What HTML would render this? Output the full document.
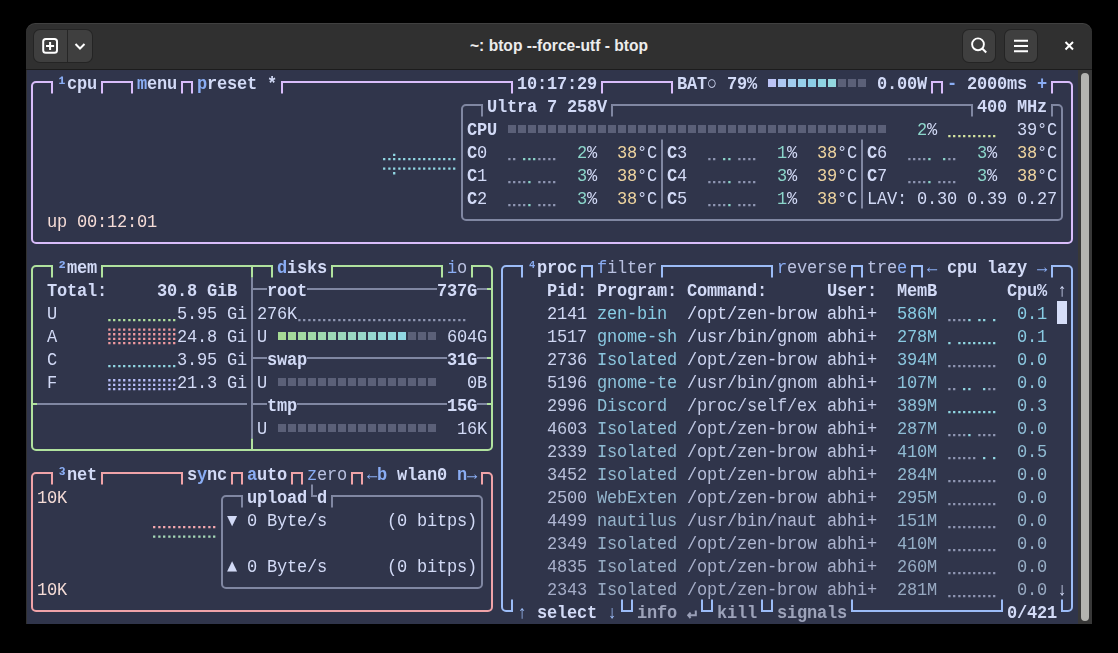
<!DOCTYPE html><html><head><meta charset="utf-8"><style>
html,body{margin:0;padding:0;background:#000;width:1118px;height:653px;overflow:hidden;position:relative}
.t{position:absolute;font-family:"Liberation Mono",monospace;font-size:17.000px;line-height:23px;letter-spacing:-0.2015px;white-space:pre;transform:scaleY(1.08);transform-origin:0 16px}
.b{font-weight:bold}
</style></head><body>
<div style="position:absolute;left:26px;top:23px;width:1066px;height:600.5px;background:#303030;border-radius:9px 9px 0 0;overflow:hidden;box-shadow:inset 0 1px 0 rgba(255,255,255,0.08)">
<div style="position:absolute;left:0;top:46px;width:1066px;height:1px;background:#1c1c1c"></div>
</div>
<div style="position:absolute;left:26.5px;top:70px;width:1051px;height:553.5px;background:#30354b"></div>
<div style="position:absolute;left:1077.5px;top:70px;width:14.5px;height:553.5px;background:#383838"></div>
<div style="position:absolute;left:1081px;top:73px;width:8px;height:548px;background:#b4b4b0;border-radius:4px"></div>
<div style="position:absolute;left:33px;top:29px;width:59.5px;height:34px;background:#3f3f3f;border-radius:7px;box-sizing:border-box;border:1px solid rgba(0,0,0,0.42)"></div>
<div style="position:absolute;left:67px;top:30px;width:1px;height:32px;background:#262626"></div>
<div style="position:absolute;left:961.5px;top:29px;width:34.5px;height:34px;background:#3f3f3f;border-radius:7px;box-sizing:border-box;border:1px solid rgba(0,0,0,0.42)"></div>
<div style="position:absolute;left:1003.5px;top:29px;width:34.5px;height:34px;background:#3f3f3f;border-radius:7px;box-sizing:border-box;border:1px solid rgba(0,0,0,0.42)"></div>
<svg style="position:absolute;left:0;top:0" width="1118" height="653">
<rect x="43.2" y="39" width="13.8" height="13.8" rx="2.6" fill="none" stroke="#fff" stroke-width="2"/>
<path d="M50.1 42V50M46 46H54.1" stroke="#fff" stroke-width="2"/>
<path d="M75.5 44L80 48.5L84.5 44" fill="none" stroke="#fff" stroke-width="2"/>
<circle cx="978" cy="44.3" r="5.9" fill="none" stroke="#fff" stroke-width="1.9"/>
<path d="M982.2 48.5L986.2 52.5" stroke="#fff" stroke-width="2"/>
<path d="M1014 40.7H1028M1014 46H1028M1014 51.3H1028" stroke="#fff" stroke-width="2"/>
<path d="M1065.5 42L1073 49.5M1073 42L1065.5 49.5" stroke="#fff" stroke-width="2"/>
<text x="559" y="51" text-anchor="middle" font-family="Liberation Sans" font-weight="bold" font-size="15.6" fill="#ececec">~: btop --force-utf - btop</text>
</svg>
<svg style="position:absolute;left:0;top:0" width="1118" height="653"><path d="M36 82A4 4 0 0 0 32 86V239A4 4 0 0 0 36 243M1068 82A4 4 0 0 1 1072 86V239A4 4 0 0 1 1068 243M36 82H52V93.5M102 93.5V82H132V93.5M182 93.5V82H192V93.5M282 93.5V82H512V93.5M602 93.5V82H672V93.5M932 93.5V82H942V93.5M1052 93.5V82H1068M36 243H1068" fill="none" stroke="#d9bdfb" stroke-width="2"/><path d="M466 105A4 4 0 0 0 462 109V216A4 4 0 0 0 466 220M1058 105A4 4 0 0 1 1062 109V216A4 4 0 0 1 1058 220M466 105H482V116.5M612 116.5V105H972V116.5M1052 116.5V105H1058M466 220H1058M662 139.5V162.5M862 139.5V162.5M662 162.5V185.5M862 162.5V185.5M662 185.5V208.5M862 185.5V208.5M252 277.5V438.5M37 404H247M252 289H267M307 289H437M477 289H487M252 358H267M307 358H447M477 358H487M252 404H267M297 404H447M477 404H487M226 496A4 4 0 0 0 222 500V584A4 4 0 0 0 226 588M478 496A4 4 0 0 1 482 500V584A4 4 0 0 1 478 588M226 496H242V507.5M332 507.5V496H478M226 588H478M312 484.5V496H317" fill="none" stroke="#8087a2" stroke-width="2"/><path d="M36 266A4 4 0 0 0 32 270V446A4 4 0 0 0 36 450M488 266A4 4 0 0 1 492 270V446A4 4 0 0 1 488 450M36 266H52V277.5M102 277.5V266H272V277.5M332 277.5V266H442V277.5M472 277.5V266H488M36 450H488M252 266V277.5M252 438.5V450M32 404H37M487 289H492M487 358H492M487 404H492" fill="none" stroke="#b0e29e" stroke-width="2"/><path d="M36 473A4 4 0 0 0 32 477V607A4 4 0 0 0 36 611M488 473A4 4 0 0 1 492 477V607A4 4 0 0 1 488 611M36 473H52V484.5M102 484.5V473H182V484.5M232 484.5V473H242V484.5M292 484.5V473H302V484.5M352 484.5V473H362V484.5M482 484.5V473H488M36 611H488" fill="none" stroke="#f0a3a8" stroke-width="2"/><path d="M506 266A4 4 0 0 0 502 270V607A4 4 0 0 0 506 611M1068 266A4 4 0 0 1 1072 270V607A4 4 0 0 1 1068 611M506 266H522V277.5M582 277.5V266H592V277.5M662 277.5V266H772V277.5M852 277.5V266H862V277.5M912 277.5V266H922V277.5M1052 277.5V266H1068M506 611H512V599.5M622 599.5V611H632V599.5M702 599.5V611H712V599.5M762 599.5V611H772V599.5M852 599.5V611H1002V599.5M1062 599.5V611H1068" fill="none" stroke="#9cbcf7" stroke-width="2"/><path d="M695.8 610.5V615.3H688.5M690.6 612.6L688.2 615.3L690.6 618" fill="none" stroke="#9aa0b8" stroke-width="2"/><rect x="768" y="79.0" width="8" height="8" fill="#bcc4f6"/><rect x="778" y="79.0" width="8" height="8" fill="#adc8f2"/><rect x="788" y="79.0" width="8" height="8" fill="#a2cdee"/><rect x="798" y="79.0" width="8" height="8" fill="#96d0ea"/><rect x="808" y="79.0" width="8" height="8" fill="#8bcde6"/><rect x="818" y="79.0" width="8" height="8" fill="#8fd3e2"/><rect x="828" y="79.0" width="8" height="8" fill="#93d7df"/><rect x="838" y="79.0" width="8" height="8" fill="#5b6078"/><rect x="848" y="79.0" width="8" height="8" fill="#5b6078"/><rect x="858" y="79.0" width="8" height="8" fill="#5b6078"/><rect x="508" y="125.0" width="8" height="8" fill="#5b6078"/><rect x="518" y="125.0" width="8" height="8" fill="#5b6078"/><rect x="528" y="125.0" width="8" height="8" fill="#5b6078"/><rect x="538" y="125.0" width="8" height="8" fill="#5b6078"/><rect x="548" y="125.0" width="8" height="8" fill="#5b6078"/><rect x="558" y="125.0" width="8" height="8" fill="#5b6078"/><rect x="568" y="125.0" width="8" height="8" fill="#5b6078"/><rect x="578" y="125.0" width="8" height="8" fill="#5b6078"/><rect x="588" y="125.0" width="8" height="8" fill="#5b6078"/><rect x="598" y="125.0" width="8" height="8" fill="#5b6078"/><rect x="608" y="125.0" width="8" height="8" fill="#5b6078"/><rect x="618" y="125.0" width="8" height="8" fill="#5b6078"/><rect x="628" y="125.0" width="8" height="8" fill="#5b6078"/><rect x="638" y="125.0" width="8" height="8" fill="#5b6078"/><rect x="648" y="125.0" width="8" height="8" fill="#5b6078"/><rect x="658" y="125.0" width="8" height="8" fill="#5b6078"/><rect x="668" y="125.0" width="8" height="8" fill="#5b6078"/><rect x="678" y="125.0" width="8" height="8" fill="#5b6078"/><rect x="688" y="125.0" width="8" height="8" fill="#5b6078"/><rect x="698" y="125.0" width="8" height="8" fill="#5b6078"/><rect x="708" y="125.0" width="8" height="8" fill="#5b6078"/><rect x="718" y="125.0" width="8" height="8" fill="#5b6078"/><rect x="728" y="125.0" width="8" height="8" fill="#5b6078"/><rect x="738" y="125.0" width="8" height="8" fill="#5b6078"/><rect x="748" y="125.0" width="8" height="8" fill="#5b6078"/><rect x="758" y="125.0" width="8" height="8" fill="#5b6078"/><rect x="768" y="125.0" width="8" height="8" fill="#5b6078"/><rect x="778" y="125.0" width="8" height="8" fill="#5b6078"/><rect x="788" y="125.0" width="8" height="8" fill="#5b6078"/><rect x="798" y="125.0" width="8" height="8" fill="#5b6078"/><rect x="808" y="125.0" width="8" height="8" fill="#5b6078"/><rect x="818" y="125.0" width="8" height="8" fill="#5b6078"/><rect x="828" y="125.0" width="8" height="8" fill="#5b6078"/><rect x="838" y="125.0" width="8" height="8" fill="#5b6078"/><rect x="848" y="125.0" width="8" height="8" fill="#5b6078"/><rect x="858" y="125.0" width="8" height="8" fill="#5b6078"/><rect x="868" y="125.0" width="8" height="8" fill="#5b6078"/><rect x="878" y="125.0" width="8" height="8" fill="#5b6078"/><rect x="278" y="332.0" width="8" height="8" fill="#a6da95"/><rect x="288" y="332.0" width="8" height="8" fill="#a4da9b"/><rect x="298" y="332.0" width="8" height="8" fill="#a2daa2"/><rect x="308" y="332.0" width="8" height="8" fill="#a1d9a8"/><rect x="318" y="332.0" width="8" height="8" fill="#9fd9af"/><rect x="328" y="332.0" width="8" height="8" fill="#9dd9b6"/><rect x="338" y="332.0" width="8" height="8" fill="#9cd8bc"/><rect x="348" y="332.0" width="8" height="8" fill="#9ad8c2"/><rect x="358" y="332.0" width="8" height="8" fill="#98d8c9"/><rect x="368" y="332.0" width="8" height="8" fill="#96d8d0"/><rect x="378" y="332.0" width="8" height="8" fill="#94d8d6"/><rect x="388" y="332.0" width="8" height="8" fill="#93d7dc"/><rect x="398" y="332.0" width="8" height="8" fill="#91d7e3"/><rect x="408" y="332.0" width="8" height="8" fill="#5b6078"/><rect x="418" y="332.0" width="8" height="8" fill="#5b6078"/><rect x="428" y="332.0" width="8" height="8" fill="#5b6078"/><rect x="278" y="378.0" width="8" height="8" fill="#5b6078"/><rect x="288" y="378.0" width="8" height="8" fill="#5b6078"/><rect x="298" y="378.0" width="8" height="8" fill="#5b6078"/><rect x="308" y="378.0" width="8" height="8" fill="#5b6078"/><rect x="318" y="378.0" width="8" height="8" fill="#5b6078"/><rect x="328" y="378.0" width="8" height="8" fill="#5b6078"/><rect x="338" y="378.0" width="8" height="8" fill="#5b6078"/><rect x="348" y="378.0" width="8" height="8" fill="#5b6078"/><rect x="358" y="378.0" width="8" height="8" fill="#5b6078"/><rect x="368" y="378.0" width="8" height="8" fill="#5b6078"/><rect x="378" y="378.0" width="8" height="8" fill="#5b6078"/><rect x="388" y="378.0" width="8" height="8" fill="#5b6078"/><rect x="398" y="378.0" width="8" height="8" fill="#5b6078"/><rect x="408" y="378.0" width="8" height="8" fill="#5b6078"/><rect x="418" y="378.0" width="8" height="8" fill="#5b6078"/><rect x="428" y="378.0" width="8" height="8" fill="#5b6078"/><rect x="278" y="424.0" width="8" height="8" fill="#5b6078"/><rect x="288" y="424.0" width="8" height="8" fill="#5b6078"/><rect x="298" y="424.0" width="8" height="8" fill="#5b6078"/><rect x="308" y="424.0" width="8" height="8" fill="#5b6078"/><rect x="318" y="424.0" width="8" height="8" fill="#5b6078"/><rect x="328" y="424.0" width="8" height="8" fill="#5b6078"/><rect x="338" y="424.0" width="8" height="8" fill="#5b6078"/><rect x="348" y="424.0" width="8" height="8" fill="#5b6078"/><rect x="358" y="424.0" width="8" height="8" fill="#5b6078"/><rect x="368" y="424.0" width="8" height="8" fill="#5b6078"/><rect x="378" y="424.0" width="8" height="8" fill="#5b6078"/><rect x="388" y="424.0" width="8" height="8" fill="#5b6078"/><rect x="398" y="424.0" width="8" height="8" fill="#5b6078"/><rect x="408" y="424.0" width="8" height="8" fill="#5b6078"/><rect x="418" y="424.0" width="8" height="8" fill="#5b6078"/><rect x="428" y="424.0" width="8" height="8" fill="#5b6078"/><rect x="1057" y="301.0" width="10" height="23" fill="#d6def8"/><path d="M948.25 135.05h2.3v2.3h-2.3zM953.05 135.05h2.3v2.3h-2.3zM958.25 135.05h2.3v2.3h-2.3zM963.05 135.05h2.3v2.3h-2.3zM968.25 135.05h2.3v2.3h-2.3zM973.05 135.05h2.3v2.3h-2.3zM978.25 135.05h2.3v2.3h-2.3zM983.05 135.05h2.3v2.3h-2.3zM988.25 135.05h2.3v2.3h-2.3zM993.05 135.05h2.3v2.3h-2.3z" fill="#d4e4a0"/><path d="M508.25 158.05h2.3v2.3h-2.3zM513.05 158.05h2.3v2.3h-2.3zM538.25 158.05h2.3v2.3h-2.3zM543.05 158.05h2.3v2.3h-2.3zM548.25 158.05h2.3v2.3h-2.3zM553.05 158.05h2.3v2.3h-2.3zM508.25 181.05h2.3v2.3h-2.3zM513.05 181.05h2.3v2.3h-2.3zM518.25 181.05h2.3v2.3h-2.3zM523.05 181.05h2.3v2.3h-2.3zM538.25 181.05h2.3v2.3h-2.3zM543.05 181.05h2.3v2.3h-2.3zM548.25 181.05h2.3v2.3h-2.3zM553.05 181.05h2.3v2.3h-2.3zM508.25 204.05h2.3v2.3h-2.3zM513.05 204.05h2.3v2.3h-2.3zM518.25 204.05h2.3v2.3h-2.3zM523.05 204.05h2.3v2.3h-2.3zM538.25 204.05h2.3v2.3h-2.3zM543.05 204.05h2.3v2.3h-2.3zM548.25 204.05h2.3v2.3h-2.3zM553.05 204.05h2.3v2.3h-2.3zM708.25 158.05h2.3v2.3h-2.3zM713.05 158.05h2.3v2.3h-2.3zM738.25 158.05h2.3v2.3h-2.3zM743.05 158.05h2.3v2.3h-2.3zM748.25 158.05h2.3v2.3h-2.3zM753.05 158.05h2.3v2.3h-2.3zM708.25 181.05h2.3v2.3h-2.3zM713.05 181.05h2.3v2.3h-2.3zM718.25 181.05h2.3v2.3h-2.3zM723.05 181.05h2.3v2.3h-2.3zM738.25 181.05h2.3v2.3h-2.3zM743.05 181.05h2.3v2.3h-2.3zM748.25 181.05h2.3v2.3h-2.3zM753.05 181.05h2.3v2.3h-2.3zM708.25 204.05h2.3v2.3h-2.3zM713.05 204.05h2.3v2.3h-2.3zM718.25 204.05h2.3v2.3h-2.3zM723.05 204.05h2.3v2.3h-2.3zM738.25 204.05h2.3v2.3h-2.3zM743.05 204.05h2.3v2.3h-2.3zM748.25 204.05h2.3v2.3h-2.3zM753.05 204.05h2.3v2.3h-2.3zM908.25 158.05h2.3v2.3h-2.3zM913.05 158.05h2.3v2.3h-2.3zM918.25 158.05h2.3v2.3h-2.3zM923.05 158.05h2.3v2.3h-2.3zM948.25 158.05h2.3v2.3h-2.3zM953.05 158.05h2.3v2.3h-2.3zM908.25 181.05h2.3v2.3h-2.3zM913.05 181.05h2.3v2.3h-2.3zM918.25 181.05h2.3v2.3h-2.3zM923.05 181.05h2.3v2.3h-2.3zM938.25 181.05h2.3v2.3h-2.3zM943.05 181.05h2.3v2.3h-2.3zM948.25 181.05h2.3v2.3h-2.3zM953.05 181.05h2.3v2.3h-2.3zM298.25 319.05h2.3v2.3h-2.3zM303.05 319.05h2.3v2.3h-2.3zM308.25 319.05h2.3v2.3h-2.3zM313.05 319.05h2.3v2.3h-2.3zM318.25 319.05h2.3v2.3h-2.3zM323.05 319.05h2.3v2.3h-2.3zM328.25 319.05h2.3v2.3h-2.3zM333.05 319.05h2.3v2.3h-2.3zM338.25 319.05h2.3v2.3h-2.3zM343.05 319.05h2.3v2.3h-2.3zM348.25 319.05h2.3v2.3h-2.3zM353.05 319.05h2.3v2.3h-2.3zM358.25 319.05h2.3v2.3h-2.3zM363.05 319.05h2.3v2.3h-2.3zM368.25 319.05h2.3v2.3h-2.3zM373.05 319.05h2.3v2.3h-2.3zM378.25 319.05h2.3v2.3h-2.3zM383.05 319.05h2.3v2.3h-2.3zM388.25 319.05h2.3v2.3h-2.3zM393.05 319.05h2.3v2.3h-2.3zM398.25 319.05h2.3v2.3h-2.3zM403.05 319.05h2.3v2.3h-2.3zM408.25 319.05h2.3v2.3h-2.3zM413.05 319.05h2.3v2.3h-2.3zM418.25 319.05h2.3v2.3h-2.3zM423.05 319.05h2.3v2.3h-2.3zM428.25 319.05h2.3v2.3h-2.3zM433.05 319.05h2.3v2.3h-2.3zM438.25 319.05h2.3v2.3h-2.3zM443.05 319.05h2.3v2.3h-2.3zM448.25 319.05h2.3v2.3h-2.3zM453.05 319.05h2.3v2.3h-2.3zM458.25 319.05h2.3v2.3h-2.3zM463.05 319.05h2.3v2.3h-2.3zM948.25 319.05h2.3v2.3h-2.3zM953.05 319.05h2.3v2.3h-2.3zM958.25 319.05h2.3v2.3h-2.3zM963.05 319.05h2.3v2.3h-2.3zM948.25 365.05h2.3v2.3h-2.3zM953.05 365.05h2.3v2.3h-2.3zM958.25 365.05h2.3v2.3h-2.3zM963.05 365.05h2.3v2.3h-2.3zM968.25 365.05h2.3v2.3h-2.3zM973.05 365.05h2.3v2.3h-2.3zM978.25 365.05h2.3v2.3h-2.3zM983.05 365.05h2.3v2.3h-2.3zM988.25 365.05h2.3v2.3h-2.3zM993.05 365.05h2.3v2.3h-2.3zM948.25 388.05h2.3v2.3h-2.3zM953.05 388.05h2.3v2.3h-2.3zM988.25 388.05h2.3v2.3h-2.3zM993.05 388.05h2.3v2.3h-2.3zM948.25 434.05h2.3v2.3h-2.3zM953.05 434.05h2.3v2.3h-2.3zM958.25 434.05h2.3v2.3h-2.3zM963.05 434.05h2.3v2.3h-2.3zM978.25 434.05h2.3v2.3h-2.3zM983.05 434.05h2.3v2.3h-2.3zM988.25 434.05h2.3v2.3h-2.3zM993.05 434.05h2.3v2.3h-2.3zM948.25 457.05h2.3v2.3h-2.3zM953.05 457.05h2.3v2.3h-2.3zM958.25 457.05h2.3v2.3h-2.3zM963.05 457.05h2.3v2.3h-2.3zM968.25 457.05h2.3v2.3h-2.3zM973.05 457.05h2.3v2.3h-2.3zM948.25 480.05h2.3v2.3h-2.3zM953.05 480.05h2.3v2.3h-2.3zM958.25 480.05h2.3v2.3h-2.3zM963.05 480.05h2.3v2.3h-2.3zM968.25 480.05h2.3v2.3h-2.3zM973.05 480.05h2.3v2.3h-2.3zM978.25 480.05h2.3v2.3h-2.3zM983.05 480.05h2.3v2.3h-2.3zM988.25 480.05h2.3v2.3h-2.3zM993.05 480.05h2.3v2.3h-2.3zM948.25 503.05h2.3v2.3h-2.3zM953.05 503.05h2.3v2.3h-2.3zM958.25 503.05h2.3v2.3h-2.3zM963.05 503.05h2.3v2.3h-2.3zM968.25 503.05h2.3v2.3h-2.3zM973.05 503.05h2.3v2.3h-2.3zM978.25 503.05h2.3v2.3h-2.3zM983.05 503.05h2.3v2.3h-2.3zM988.25 503.05h2.3v2.3h-2.3zM993.05 503.05h2.3v2.3h-2.3zM948.25 526.05h2.3v2.3h-2.3zM953.05 526.05h2.3v2.3h-2.3zM958.25 526.05h2.3v2.3h-2.3zM963.05 526.05h2.3v2.3h-2.3zM968.25 526.05h2.3v2.3h-2.3zM973.05 526.05h2.3v2.3h-2.3zM978.25 526.05h2.3v2.3h-2.3zM983.05 526.05h2.3v2.3h-2.3zM988.25 526.05h2.3v2.3h-2.3zM993.05 526.05h2.3v2.3h-2.3zM948.25 549.05h2.3v2.3h-2.3zM953.05 549.05h2.3v2.3h-2.3zM958.25 549.05h2.3v2.3h-2.3zM963.05 549.05h2.3v2.3h-2.3zM968.25 549.05h2.3v2.3h-2.3zM973.05 549.05h2.3v2.3h-2.3zM978.25 549.05h2.3v2.3h-2.3zM983.05 549.05h2.3v2.3h-2.3zM988.25 549.05h2.3v2.3h-2.3zM993.05 549.05h2.3v2.3h-2.3zM948.25 572.05h2.3v2.3h-2.3zM953.05 572.05h2.3v2.3h-2.3zM958.25 572.05h2.3v2.3h-2.3zM963.05 572.05h2.3v2.3h-2.3zM968.25 572.05h2.3v2.3h-2.3zM973.05 572.05h2.3v2.3h-2.3zM978.25 572.05h2.3v2.3h-2.3zM983.05 572.05h2.3v2.3h-2.3zM988.25 572.05h2.3v2.3h-2.3zM993.05 572.05h2.3v2.3h-2.3zM948.25 595.05h2.3v2.3h-2.3zM953.05 595.05h2.3v2.3h-2.3zM958.25 595.05h2.3v2.3h-2.3zM963.05 595.05h2.3v2.3h-2.3zM968.25 595.05h2.3v2.3h-2.3zM973.05 595.05h2.3v2.3h-2.3zM978.25 595.05h2.3v2.3h-2.3zM983.05 595.05h2.3v2.3h-2.3zM988.25 595.05h2.3v2.3h-2.3zM993.05 595.05h2.3v2.3h-2.3z" fill="#8f96b3"/><path d="M523.05 158.05h2.3v2.3h-2.3zM528.25 158.05h2.3v2.3h-2.3zM533.05 158.05h2.3v2.3h-2.3zM528.25 181.05h2.3v2.3h-2.3zM528.25 204.05h2.3v2.3h-2.3zM723.05 158.05h2.3v2.3h-2.3zM728.25 158.05h2.3v2.3h-2.3zM728.25 181.05h2.3v2.3h-2.3zM728.25 204.05h2.3v2.3h-2.3zM928.25 158.05h2.3v2.3h-2.3zM943.05 158.05h2.3v2.3h-2.3zM928.25 181.05h2.3v2.3h-2.3z" fill="#8bd5ca"/><path d="M383.05 158.05h2.3v2.3h-2.3zM388.25 158.05h2.3v2.3h-2.3zM393.05 158.05h2.3v2.3h-2.3zM398.25 158.05h2.3v2.3h-2.3zM403.05 158.05h2.3v2.3h-2.3zM408.25 158.05h2.3v2.3h-2.3zM413.05 158.05h2.3v2.3h-2.3zM418.25 158.05h2.3v2.3h-2.3zM423.05 158.05h2.3v2.3h-2.3zM428.25 158.05h2.3v2.3h-2.3zM433.05 158.05h2.3v2.3h-2.3zM438.25 158.05h2.3v2.3h-2.3zM443.05 158.05h2.3v2.3h-2.3zM448.25 158.05h2.3v2.3h-2.3zM453.05 158.05h2.3v2.3h-2.3zM393.05 153.65h2.3v2.3h-2.3zM383.05 167.55h2.3v2.3h-2.3zM388.25 167.55h2.3v2.3h-2.3zM393.05 167.55h2.3v2.3h-2.3zM398.25 167.55h2.3v2.3h-2.3zM403.05 167.55h2.3v2.3h-2.3zM408.25 167.55h2.3v2.3h-2.3zM413.05 167.55h2.3v2.3h-2.3zM418.25 167.55h2.3v2.3h-2.3zM423.05 167.55h2.3v2.3h-2.3zM428.25 167.55h2.3v2.3h-2.3zM433.05 167.55h2.3v2.3h-2.3zM438.25 167.55h2.3v2.3h-2.3zM443.05 167.55h2.3v2.3h-2.3zM448.25 167.55h2.3v2.3h-2.3zM453.05 167.55h2.3v2.3h-2.3zM393.05 172.10h2.3v2.3h-2.3zM108.25 365.05h2.3v2.3h-2.3zM113.05 365.05h2.3v2.3h-2.3zM118.25 365.05h2.3v2.3h-2.3zM123.05 365.05h2.3v2.3h-2.3zM128.25 365.05h2.3v2.3h-2.3zM133.05 365.05h2.3v2.3h-2.3zM138.25 365.05h2.3v2.3h-2.3zM143.05 365.05h2.3v2.3h-2.3zM148.25 365.05h2.3v2.3h-2.3zM153.05 365.05h2.3v2.3h-2.3zM158.25 365.05h2.3v2.3h-2.3zM163.05 365.05h2.3v2.3h-2.3zM168.25 365.05h2.3v2.3h-2.3zM173.05 365.05h2.3v2.3h-2.3zM968.25 319.05h2.3v2.3h-2.3zM978.25 319.05h2.3v2.3h-2.3zM983.05 319.05h2.3v2.3h-2.3zM993.05 319.05h2.3v2.3h-2.3zM948.25 342.05h2.3v2.3h-2.3zM958.25 342.05h2.3v2.3h-2.3zM963.05 342.05h2.3v2.3h-2.3zM968.25 342.05h2.3v2.3h-2.3zM973.05 342.05h2.3v2.3h-2.3zM978.25 342.05h2.3v2.3h-2.3zM983.05 342.05h2.3v2.3h-2.3zM988.25 342.05h2.3v2.3h-2.3zM993.05 342.05h2.3v2.3h-2.3zM963.05 388.05h2.3v2.3h-2.3zM968.25 388.05h2.3v2.3h-2.3zM983.05 388.05h2.3v2.3h-2.3zM948.25 411.05h2.3v2.3h-2.3zM953.05 411.05h2.3v2.3h-2.3zM958.25 411.05h2.3v2.3h-2.3zM963.05 411.05h2.3v2.3h-2.3zM968.25 411.05h2.3v2.3h-2.3zM973.05 411.05h2.3v2.3h-2.3zM978.25 411.05h2.3v2.3h-2.3zM983.05 411.05h2.3v2.3h-2.3zM988.25 411.05h2.3v2.3h-2.3zM993.05 411.05h2.3v2.3h-2.3zM968.25 434.05h2.3v2.3h-2.3zM983.05 457.05h2.3v2.3h-2.3zM993.05 457.05h2.3v2.3h-2.3z" fill="#91d7e3"/><path d="M108.25 319.05h2.3v2.3h-2.3zM113.05 319.05h2.3v2.3h-2.3zM118.25 319.05h2.3v2.3h-2.3zM123.05 319.05h2.3v2.3h-2.3zM128.25 319.05h2.3v2.3h-2.3zM133.05 319.05h2.3v2.3h-2.3zM138.25 319.05h2.3v2.3h-2.3zM143.05 319.05h2.3v2.3h-2.3zM148.25 319.05h2.3v2.3h-2.3zM153.05 319.05h2.3v2.3h-2.3zM158.25 319.05h2.3v2.3h-2.3zM163.05 319.05h2.3v2.3h-2.3zM168.25 319.05h2.3v2.3h-2.3zM173.05 319.05h2.3v2.3h-2.3z" fill="#b0e29e"/><path d="M108.25 328.55h2.3v2.3h-2.3zM113.05 328.55h2.3v2.3h-2.3zM118.25 328.55h2.3v2.3h-2.3zM123.05 328.55h2.3v2.3h-2.3zM128.25 328.55h2.3v2.3h-2.3zM133.05 328.55h2.3v2.3h-2.3zM138.25 328.55h2.3v2.3h-2.3zM143.05 328.55h2.3v2.3h-2.3zM148.25 328.55h2.3v2.3h-2.3zM153.05 328.55h2.3v2.3h-2.3zM158.25 328.55h2.3v2.3h-2.3zM163.05 328.55h2.3v2.3h-2.3zM168.25 328.55h2.3v2.3h-2.3zM173.05 328.55h2.3v2.3h-2.3zM108.25 333.10h2.3v2.3h-2.3zM113.05 333.10h2.3v2.3h-2.3zM118.25 333.10h2.3v2.3h-2.3zM123.05 333.10h2.3v2.3h-2.3zM128.25 333.10h2.3v2.3h-2.3zM133.05 333.10h2.3v2.3h-2.3zM138.25 333.10h2.3v2.3h-2.3zM143.05 333.10h2.3v2.3h-2.3zM148.25 333.10h2.3v2.3h-2.3zM153.05 333.10h2.3v2.3h-2.3zM158.25 333.10h2.3v2.3h-2.3zM163.05 333.10h2.3v2.3h-2.3zM168.25 333.10h2.3v2.3h-2.3zM173.05 333.10h2.3v2.3h-2.3zM108.25 337.65h2.3v2.3h-2.3zM113.05 337.65h2.3v2.3h-2.3zM118.25 337.65h2.3v2.3h-2.3zM123.05 337.65h2.3v2.3h-2.3zM128.25 337.65h2.3v2.3h-2.3zM133.05 337.65h2.3v2.3h-2.3zM138.25 337.65h2.3v2.3h-2.3zM143.05 337.65h2.3v2.3h-2.3zM148.25 337.65h2.3v2.3h-2.3zM153.05 337.65h2.3v2.3h-2.3zM158.25 337.65h2.3v2.3h-2.3zM163.05 337.65h2.3v2.3h-2.3zM168.25 337.65h2.3v2.3h-2.3zM173.05 337.65h2.3v2.3h-2.3zM108.25 342.05h2.3v2.3h-2.3zM113.05 342.05h2.3v2.3h-2.3zM118.25 342.05h2.3v2.3h-2.3zM123.05 342.05h2.3v2.3h-2.3zM128.25 342.05h2.3v2.3h-2.3zM133.05 342.05h2.3v2.3h-2.3zM138.25 342.05h2.3v2.3h-2.3zM143.05 342.05h2.3v2.3h-2.3zM148.25 342.05h2.3v2.3h-2.3zM153.05 342.05h2.3v2.3h-2.3zM158.25 342.05h2.3v2.3h-2.3zM163.05 342.05h2.3v2.3h-2.3zM168.25 342.05h2.3v2.3h-2.3zM173.05 342.05h2.3v2.3h-2.3z" fill="#ee99a0"/><path d="M108.25 379.10h2.3v2.3h-2.3zM113.05 379.10h2.3v2.3h-2.3zM118.25 379.10h2.3v2.3h-2.3zM123.05 379.10h2.3v2.3h-2.3zM128.25 379.10h2.3v2.3h-2.3zM133.05 379.10h2.3v2.3h-2.3zM138.25 379.10h2.3v2.3h-2.3zM143.05 379.10h2.3v2.3h-2.3zM148.25 379.10h2.3v2.3h-2.3zM153.05 379.10h2.3v2.3h-2.3zM158.25 379.10h2.3v2.3h-2.3zM163.05 379.10h2.3v2.3h-2.3zM168.25 379.10h2.3v2.3h-2.3zM173.05 379.10h2.3v2.3h-2.3zM108.25 383.65h2.3v2.3h-2.3zM113.05 383.65h2.3v2.3h-2.3zM118.25 383.65h2.3v2.3h-2.3zM123.05 383.65h2.3v2.3h-2.3zM128.25 383.65h2.3v2.3h-2.3zM133.05 383.65h2.3v2.3h-2.3zM138.25 383.65h2.3v2.3h-2.3zM143.05 383.65h2.3v2.3h-2.3zM148.25 383.65h2.3v2.3h-2.3zM153.05 383.65h2.3v2.3h-2.3zM158.25 383.65h2.3v2.3h-2.3zM163.05 383.65h2.3v2.3h-2.3zM168.25 383.65h2.3v2.3h-2.3zM173.05 383.65h2.3v2.3h-2.3zM108.25 388.05h2.3v2.3h-2.3zM113.05 388.05h2.3v2.3h-2.3zM118.25 388.05h2.3v2.3h-2.3zM123.05 388.05h2.3v2.3h-2.3zM128.25 388.05h2.3v2.3h-2.3zM133.05 388.05h2.3v2.3h-2.3zM138.25 388.05h2.3v2.3h-2.3zM143.05 388.05h2.3v2.3h-2.3zM148.25 388.05h2.3v2.3h-2.3zM153.05 388.05h2.3v2.3h-2.3zM158.25 388.05h2.3v2.3h-2.3zM163.05 388.05h2.3v2.3h-2.3zM168.25 388.05h2.3v2.3h-2.3zM173.05 388.05h2.3v2.3h-2.3z" fill="#b7bdf8"/><path d="M153.05 526.05h2.3v2.3h-2.3zM158.25 526.05h2.3v2.3h-2.3zM163.05 526.05h2.3v2.3h-2.3zM168.25 526.05h2.3v2.3h-2.3zM173.05 526.05h2.3v2.3h-2.3zM178.25 526.05h2.3v2.3h-2.3zM183.05 526.05h2.3v2.3h-2.3zM188.25 526.05h2.3v2.3h-2.3zM193.05 526.05h2.3v2.3h-2.3zM198.25 526.05h2.3v2.3h-2.3zM203.05 526.05h2.3v2.3h-2.3zM208.25 526.05h2.3v2.3h-2.3zM213.05 526.05h2.3v2.3h-2.3z" fill="#f5a8b0"/><path d="M153.05 535.55h2.3v2.3h-2.3zM158.25 535.55h2.3v2.3h-2.3zM163.05 535.55h2.3v2.3h-2.3zM168.25 535.55h2.3v2.3h-2.3zM173.05 535.55h2.3v2.3h-2.3zM178.25 535.55h2.3v2.3h-2.3zM183.05 535.55h2.3v2.3h-2.3zM188.25 535.55h2.3v2.3h-2.3zM193.05 535.55h2.3v2.3h-2.3zM198.25 535.55h2.3v2.3h-2.3zM203.05 535.55h2.3v2.3h-2.3zM208.25 535.55h2.3v2.3h-2.3zM213.05 535.55h2.3v2.3h-2.3z" fill="#a6dab8"/></svg>
<div style="position:absolute;left:0;top:0;width:1118px;height:653px;will-change:transform">
<div class="t b" style="left:57px;top:73.0px;color:#8aadf4">¹</div>
<div class="t b" style="left:67px;top:73.0px;color:#d2daf6">cpu</div>
<div class="t b" style="left:137px;top:73.0px;color:#8aadf4">m</div>
<div class="t b" style="left:147px;top:73.0px;color:#d2daf6">enu</div>
<div class="t b" style="left:197px;top:73.0px;color:#8aadf4">p</div>
<div class="t b" style="left:207px;top:73.0px;color:#d2daf6">reset *</div>
<div class="t b" style="left:517px;top:73.0px;color:#d2daf6">10:17:29</div>
<div class="t b" style="left:677px;top:73.0px;color:#d2daf6">BAT</div>
<div class="t" style="left:707px;top:73.0px;color:#d2daf6">○</div>
<div class="t b" style="left:727px;top:73.0px;color:#d2daf6">79%</div>
<div class="t b" style="left:877px;top:73.0px;color:#d2daf6">0.00W</div>
<div class="t b" style="left:947px;top:73.0px;color:#8aadf4">-</div>
<div class="t b" style="left:967px;top:73.0px;color:#d2daf6">2000ms</div>
<div class="t b" style="left:1037px;top:73.0px;color:#8aadf4">+</div>
<div class="t b" style="left:487px;top:96.0px;color:#d2daf6">Ultra 7 258V</div>
<div class="t b" style="left:977px;top:96.0px;color:#d2daf6">400 MHz</div>
<div class="t b" style="left:467px;top:119.0px;color:#d2daf6">CPU</div>
<div class="t" style="left:917px;top:119.0px;color:#8bd5ca">2</div>
<div class="t" style="left:927px;top:119.0px;color:#d2daf6">%</div>
<div class="t" style="left:1017px;top:119.0px;color:#d2daf6">39°C</div>
<div class="t b" style="left:467px;top:142.0px;color:#d2daf6">C</div>
<div class="t" style="left:477px;top:142.0px;color:#d2daf6">0</div>
<div class="t" style="left:577px;top:142.0px;color:#8bd5ca">2</div>
<div class="t" style="left:587px;top:142.0px;color:#d2daf6">%</div>
<div class="t" style="left:617px;top:142.0px;color:#eed49f">38</div>
<div class="t" style="left:637px;top:142.0px;color:#d2daf6">°C</div>
<div class="t b" style="left:467px;top:165.0px;color:#d2daf6">C</div>
<div class="t" style="left:477px;top:165.0px;color:#d2daf6">1</div>
<div class="t" style="left:577px;top:165.0px;color:#8bd5ca">3</div>
<div class="t" style="left:587px;top:165.0px;color:#d2daf6">%</div>
<div class="t" style="left:617px;top:165.0px;color:#eed49f">38</div>
<div class="t" style="left:637px;top:165.0px;color:#d2daf6">°C</div>
<div class="t b" style="left:467px;top:188.0px;color:#d2daf6">C</div>
<div class="t" style="left:477px;top:188.0px;color:#d2daf6">2</div>
<div class="t" style="left:577px;top:188.0px;color:#8bd5ca">3</div>
<div class="t" style="left:587px;top:188.0px;color:#d2daf6">%</div>
<div class="t" style="left:617px;top:188.0px;color:#eed49f">38</div>
<div class="t" style="left:637px;top:188.0px;color:#d2daf6">°C</div>
<div class="t b" style="left:667px;top:142.0px;color:#d2daf6">C</div>
<div class="t" style="left:677px;top:142.0px;color:#d2daf6">3</div>
<div class="t" style="left:777px;top:142.0px;color:#8bd5ca">1</div>
<div class="t" style="left:787px;top:142.0px;color:#d2daf6">%</div>
<div class="t" style="left:817px;top:142.0px;color:#eed49f">38</div>
<div class="t" style="left:837px;top:142.0px;color:#d2daf6">°C</div>
<div class="t b" style="left:667px;top:165.0px;color:#d2daf6">C</div>
<div class="t" style="left:677px;top:165.0px;color:#d2daf6">4</div>
<div class="t" style="left:777px;top:165.0px;color:#8bd5ca">3</div>
<div class="t" style="left:787px;top:165.0px;color:#d2daf6">%</div>
<div class="t" style="left:817px;top:165.0px;color:#eed49f">39</div>
<div class="t" style="left:837px;top:165.0px;color:#d2daf6">°C</div>
<div class="t b" style="left:667px;top:188.0px;color:#d2daf6">C</div>
<div class="t" style="left:677px;top:188.0px;color:#d2daf6">5</div>
<div class="t" style="left:777px;top:188.0px;color:#8bd5ca">1</div>
<div class="t" style="left:787px;top:188.0px;color:#d2daf6">%</div>
<div class="t" style="left:817px;top:188.0px;color:#eed49f">38</div>
<div class="t" style="left:837px;top:188.0px;color:#d2daf6">°C</div>
<div class="t b" style="left:867px;top:142.0px;color:#d2daf6">C</div>
<div class="t" style="left:877px;top:142.0px;color:#d2daf6">6</div>
<div class="t" style="left:977px;top:142.0px;color:#8bd5ca">3</div>
<div class="t" style="left:987px;top:142.0px;color:#d2daf6">%</div>
<div class="t" style="left:1017px;top:142.0px;color:#eed49f">38</div>
<div class="t" style="left:1037px;top:142.0px;color:#d2daf6">°C</div>
<div class="t b" style="left:867px;top:165.0px;color:#d2daf6">C</div>
<div class="t" style="left:877px;top:165.0px;color:#d2daf6">7</div>
<div class="t" style="left:977px;top:165.0px;color:#8bd5ca">3</div>
<div class="t" style="left:987px;top:165.0px;color:#d2daf6">%</div>
<div class="t" style="left:1017px;top:165.0px;color:#eed49f">38</div>
<div class="t" style="left:1037px;top:165.0px;color:#d2daf6">°C</div>
<div class="t" style="left:867px;top:188.0px;color:#d2daf6">LAV: 0.30 0.39 0.27</div>
<div class="t" style="left:47px;top:211.0px;color:#f4dbd6">up 00:12:01</div>
<div class="t b" style="left:57px;top:257.0px;color:#8aadf4">²</div>
<div class="t b" style="left:67px;top:257.0px;color:#d2daf6">mem</div>
<div class="t b" style="left:277px;top:257.0px;color:#8aadf4">d</div>
<div class="t b" style="left:287px;top:257.0px;color:#d2daf6">isks</div>
<div class="t" style="left:447px;top:257.0px;color:#8aadf4">i</div>
<div class="t" style="left:457px;top:257.0px;color:#b8c0e0">o</div>
<div class="t b" style="left:47px;top:280.0px;color:#d2daf6">Total:</div>
<div class="t b" style="left:157px;top:280.0px;color:#d2daf6">30.8 GiB</div>
<div class="t" style="left:47px;top:303.0px;color:#d2daf6">U</div>
<div class="t" style="left:177px;top:303.0px;color:#d2daf6">5.95 Gi</div>
<div class="t" style="left:47px;top:326.0px;color:#d2daf6">A</div>
<div class="t" style="left:177px;top:326.0px;color:#d2daf6">24.8 Gi</div>
<div class="t" style="left:47px;top:349.0px;color:#d2daf6">C</div>
<div class="t" style="left:177px;top:349.0px;color:#d2daf6">3.95 Gi</div>
<div class="t" style="left:47px;top:372.0px;color:#d2daf6">F</div>
<div class="t" style="left:177px;top:372.0px;color:#d2daf6">21.3 Gi</div>
<div class="t b" style="left:267px;top:280.0px;color:#d2daf6">root</div>
<div class="t b" style="left:437px;top:280.0px;color:#d2daf6">737G</div>
<div class="t b" style="left:267px;top:349.0px;color:#d2daf6">swap</div>
<div class="t b" style="left:447px;top:349.0px;color:#d2daf6">31G</div>
<div class="t b" style="left:267px;top:395.0px;color:#d2daf6">tmp</div>
<div class="t b" style="left:447px;top:395.0px;color:#d2daf6">15G</div>
<div class="t" style="left:257px;top:303.0px;color:#d2daf6">276K</div>
<div class="t" style="left:257px;top:326.0px;color:#d2daf6">U</div>
<div class="t" style="left:447px;top:326.0px;color:#d2daf6">604G</div>
<div class="t" style="left:257px;top:372.0px;color:#d2daf6">U</div>
<div class="t" style="left:467px;top:372.0px;color:#d2daf6">0B</div>
<div class="t" style="left:257px;top:418.0px;color:#d2daf6">U</div>
<div class="t" style="left:457px;top:418.0px;color:#d2daf6">16K</div>
<div class="t b" style="left:57px;top:464.0px;color:#8aadf4">³</div>
<div class="t b" style="left:67px;top:464.0px;color:#d2daf6">net</div>
<div class="t b" style="left:187px;top:464.0px;color:#d2daf6">s</div>
<div class="t b" style="left:197px;top:464.0px;color:#8aadf4">y</div>
<div class="t b" style="left:207px;top:464.0px;color:#d2daf6">nc</div>
<div class="t b" style="left:247px;top:464.0px;color:#8aadf4">a</div>
<div class="t b" style="left:257px;top:464.0px;color:#d2daf6">uto</div>
<div class="t" style="left:307px;top:464.0px;color:#8aadf4">z</div>
<div class="t" style="left:317px;top:464.0px;color:#b8c0e0">ero</div>
<div class="t" style="left:367px;top:464.0px;color:#8aadf4">←</div>
<div class="t b" style="left:377px;top:464.0px;color:#8aadf4">b</div>
<div class="t b" style="left:397px;top:464.0px;color:#d2daf6">wlan0</div>
<div class="t b" style="left:457px;top:464.0px;color:#8aadf4">n</div>
<div class="t" style="left:467px;top:464.0px;color:#8aadf4">→</div>
<div class="t" style="left:37px;top:487.0px;color:#f4dbd6">10K</div>
<div class="t" style="left:37px;top:579.0px;color:#f4dbd6">10K</div>
<div class="t b" style="left:247px;top:487.0px;color:#d2daf6">upload</div>
<div class="t b" style="left:317px;top:487.0px;color:#d2daf6">d</div>
<div class="t" style="left:227px;top:510.0px;color:#d2daf6">▼</div>
<div class="t" style="left:247px;top:510.0px;color:#d2daf6">0 Byte/s</div>
<div class="t" style="left:387px;top:510.0px;color:#d2daf6">(0 bitps)</div>
<div class="t" style="left:227px;top:556.0px;color:#d2daf6">▲</div>
<div class="t" style="left:247px;top:556.0px;color:#d2daf6">0 Byte/s</div>
<div class="t" style="left:387px;top:556.0px;color:#d2daf6">(0 bitps)</div>
<div class="t b" style="left:527px;top:257.0px;color:#8aadf4">⁴</div>
<div class="t b" style="left:537px;top:257.0px;color:#d2daf6">proc</div>
<div class="t" style="left:597px;top:257.0px;color:#8aadf4">f</div>
<div class="t" style="left:607px;top:257.0px;color:#b8c0e0">ilter</div>
<div class="t" style="left:777px;top:257.0px;color:#8aadf4">r</div>
<div class="t" style="left:787px;top:257.0px;color:#b8c0e0">everse</div>
<div class="t" style="left:867px;top:257.0px;color:#b8c0e0">tre</div>
<div class="t" style="left:897px;top:257.0px;color:#8aadf4">e</div>
<div class="t" style="left:927px;top:257.0px;color:#8aadf4">←</div>
<div class="t b" style="left:947px;top:257.0px;color:#d2daf6">cpu lazy</div>
<div class="t" style="left:1037px;top:257.0px;color:#8aadf4">→</div>
<div class="t b" style="left:547px;top:280.0px;color:#d2daf6">Pid: Program: Command:</div>
<div class="t b" style="left:827px;top:280.0px;color:#d2daf6">User:</div>
<div class="t b" style="left:897px;top:280.0px;color:#d2daf6">MemB</div>
<div class="t b" style="left:1007px;top:280.0px;color:#d2daf6">Cpu%</div>
<div class="t" style="left:1057px;top:280.0px;color:#d2daf6">↑</div>
<div class="t" style="left:547px;top:303.0px;color:#d2daf6">2141</div>
<div class="t" style="left:597px;top:303.0px;color:#88cce4">zen-bin </div>
<div class="t" style="left:687px;top:303.0px;color:#d2daf6">/opt/zen-brow</div>
<div class="t" style="left:827px;top:303.0px;color:#d2daf6">abhi+</div>
<div class="t" style="left:897px;top:303.0px;color:#88cce4">586M</div>
<div class="t" style="left:1017px;top:303.0px;color:#88cce4">0.1</div>
<div class="t" style="left:547px;top:326.0px;color:#ced6f2">1517</div>
<div class="t" style="left:597px;top:326.0px;color:#89c9e1">gnome-sh</div>
<div class="t" style="left:687px;top:326.0px;color:#ced6f2">/usr/bin/gnom</div>
<div class="t" style="left:827px;top:326.0px;color:#ced6f2">abhi+</div>
<div class="t" style="left:897px;top:326.0px;color:#89c9e1">278M</div>
<div class="t" style="left:1017px;top:326.0px;color:#89c9e1">0.1</div>
<div class="t" style="left:547px;top:349.0px;color:#cad2ee">2736</div>
<div class="t" style="left:597px;top:349.0px;color:#8bc6de">Isolated</div>
<div class="t" style="left:687px;top:349.0px;color:#cad2ee">/opt/zen-brow</div>
<div class="t" style="left:827px;top:349.0px;color:#cad2ee">abhi+</div>
<div class="t" style="left:897px;top:349.0px;color:#8bc6de">394M</div>
<div class="t" style="left:1017px;top:349.0px;color:#8bc6de">0.0</div>
<div class="t" style="left:547px;top:372.0px;color:#c7ceea">5196</div>
<div class="t" style="left:597px;top:372.0px;color:#8cc3db">gnome-te</div>
<div class="t" style="left:687px;top:372.0px;color:#c7ceea">/usr/bin/gnom</div>
<div class="t" style="left:827px;top:372.0px;color:#c7ceea">abhi+</div>
<div class="t" style="left:897px;top:372.0px;color:#8cc3db">107M</div>
<div class="t" style="left:1017px;top:372.0px;color:#8cc3db">0.0</div>
<div class="t" style="left:547px;top:395.0px;color:#c3cbe6">2996</div>
<div class="t" style="left:597px;top:395.0px;color:#8dc0d8">Discord </div>
<div class="t" style="left:687px;top:395.0px;color:#c3cbe6">/proc/self/ex</div>
<div class="t" style="left:827px;top:395.0px;color:#c3cbe6">abhi+</div>
<div class="t" style="left:897px;top:395.0px;color:#8dc0d8">389M</div>
<div class="t" style="left:1017px;top:395.0px;color:#8dc0d8">0.3</div>
<div class="t" style="left:547px;top:418.0px;color:#bfc7e2">4603</div>
<div class="t" style="left:597px;top:418.0px;color:#8fbdd5">Isolated</div>
<div class="t" style="left:687px;top:418.0px;color:#bfc7e2">/opt/zen-brow</div>
<div class="t" style="left:827px;top:418.0px;color:#bfc7e2">abhi+</div>
<div class="t" style="left:897px;top:418.0px;color:#8fbdd5">287M</div>
<div class="t" style="left:1017px;top:418.0px;color:#8fbdd5">0.0</div>
<div class="t" style="left:547px;top:441.0px;color:#bbc3de">2339</div>
<div class="t" style="left:597px;top:441.0px;color:#90bbd3">Isolated</div>
<div class="t" style="left:687px;top:441.0px;color:#bbc3de">/opt/zen-brow</div>
<div class="t" style="left:827px;top:441.0px;color:#bbc3de">abhi+</div>
<div class="t" style="left:897px;top:441.0px;color:#90bbd3">410M</div>
<div class="t" style="left:1017px;top:441.0px;color:#90bbd3">0.5</div>
<div class="t" style="left:547px;top:464.0px;color:#b7bfda">3452</div>
<div class="t" style="left:597px;top:464.0px;color:#91b8d0">Isolated</div>
<div class="t" style="left:687px;top:464.0px;color:#b7bfda">/opt/zen-brow</div>
<div class="t" style="left:827px;top:464.0px;color:#b7bfda">abhi+</div>
<div class="t" style="left:897px;top:464.0px;color:#91b8d0">284M</div>
<div class="t" style="left:1017px;top:464.0px;color:#91b8d0">0.0</div>
<div class="t" style="left:547px;top:487.0px;color:#b4bbd6">2500</div>
<div class="t" style="left:597px;top:487.0px;color:#93b5cd">WebExten</div>
<div class="t" style="left:687px;top:487.0px;color:#b4bbd6">/opt/zen-brow</div>
<div class="t" style="left:827px;top:487.0px;color:#b4bbd6">abhi+</div>
<div class="t" style="left:897px;top:487.0px;color:#93b5cd">295M</div>
<div class="t" style="left:1017px;top:487.0px;color:#93b5cd">0.0</div>
<div class="t" style="left:547px;top:510.0px;color:#b0b7d3">4499</div>
<div class="t" style="left:597px;top:510.0px;color:#94b2ca">nautilus</div>
<div class="t" style="left:687px;top:510.0px;color:#b0b7d3">/usr/bin/naut</div>
<div class="t" style="left:827px;top:510.0px;color:#b0b7d3">abhi+</div>
<div class="t" style="left:897px;top:510.0px;color:#94b2ca">151M</div>
<div class="t" style="left:1017px;top:510.0px;color:#94b2ca">0.0</div>
<div class="t" style="left:547px;top:533.0px;color:#acb4cf">2349</div>
<div class="t" style="left:597px;top:533.0px;color:#95afc7">Isolated</div>
<div class="t" style="left:687px;top:533.0px;color:#acb4cf">/opt/zen-brow</div>
<div class="t" style="left:827px;top:533.0px;color:#acb4cf">abhi+</div>
<div class="t" style="left:897px;top:533.0px;color:#95afc7">410M</div>
<div class="t" style="left:1017px;top:533.0px;color:#95afc7">0.0</div>
<div class="t" style="left:547px;top:556.0px;color:#a8b0cb">4835</div>
<div class="t" style="left:597px;top:556.0px;color:#97acc4">Isolated</div>
<div class="t" style="left:687px;top:556.0px;color:#a8b0cb">/opt/zen-brow</div>
<div class="t" style="left:827px;top:556.0px;color:#a8b0cb">abhi+</div>
<div class="t" style="left:897px;top:556.0px;color:#97acc4">260M</div>
<div class="t" style="left:1017px;top:556.0px;color:#97acc4">0.0</div>
<div class="t" style="left:547px;top:579.0px;color:#a4acc7">2343</div>
<div class="t" style="left:597px;top:579.0px;color:#98a9c1">Isolated</div>
<div class="t" style="left:687px;top:579.0px;color:#a4acc7">/opt/zen-brow</div>
<div class="t" style="left:827px;top:579.0px;color:#a4acc7">abhi+</div>
<div class="t" style="left:897px;top:579.0px;color:#98a9c1">281M</div>
<div class="t" style="left:1017px;top:579.0px;color:#98a9c1">0.0</div>
<div class="t" style="left:1057px;top:579.0px;color:#d2daf6">↓</div>
<div class="t" style="left:517px;top:602.0px;color:#9cbcf7">↑</div>
<div class="t b" style="left:537px;top:602.0px;color:#d2daf6">select</div>
<div class="t" style="left:607px;top:602.0px;color:#9cbcf7">↓</div>
<div class="t b" style="left:637px;top:602.0px;color:#9da3ba">info</div>
<div class="t b" style="left:717px;top:602.0px;color:#9da3ba">kill</div>
<div class="t b" style="left:777px;top:602.0px;color:#9da3ba">signals</div>
<div class="t b" style="left:1007px;top:602.0px;color:#d2daf6">0/421</div>
</div>
</body></html>
